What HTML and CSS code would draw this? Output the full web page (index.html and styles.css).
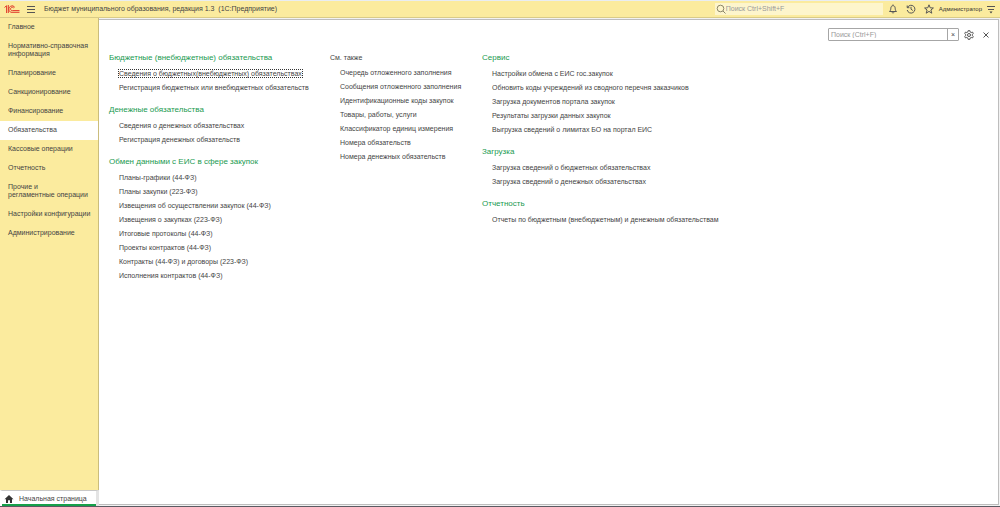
FILE: index.html
```html
<!DOCTYPE html>
<html lang="ru">
<head>
<meta charset="utf-8">
<title>Бюджет муниципального образования</title>
<link rel="stylesheet" href="styles.css">
</head>
<body>
<div class="app">
  <header class="topbar">
    <svg class="logo" viewBox="0 0 16 10" aria-hidden="true"><path d="M.5 3.500 2.200 2M2.600 1.500V9M4.300 1V9M10.800 3.300A3.300 3.300 0 1 0 9 8.300H15.500M9.700 4A1.700 1.700 0 1 0 8.600 6.600H15.500"/></svg>
    <button class="icon-btn menu-btn" aria-label="Меню"><svg class="icon" viewBox="0 0 10 10"><path d="M1 2.500h8M1 5.500h8M1 8.500h8"/></svg></button>
    <h1 class="app-title">Бюджет муниципального образования, редакция 1.3&nbsp; (1С:Предприятие)</h1>
    <label class="global-search">
      <svg class="icon" viewBox="0 0 10 10"><circle cx="4.500" cy="4.500" r="3.300"/><path d="M7 7l2.500 2.500"/></svg>
      <input type="text" placeholder="Поиск Ctrl+Shift+F" aria-label="Поиск Ctrl+Shift+F">
    </label>
    <div class="tools">
      <button class="icon-btn" aria-label="Уведомления"><svg class="icon" viewBox="0 0 10 10"><path d="M5 .5v1M1.500 7.500C3.200 6 2.600 4.500 3 3.200 3.500 1.200 6.500 1.200 7 3.200 7.400 4.500 6.800 6 8.500 7.500ZM4 8.300c.3 1 1.700 1 2 0"/></svg></button>
      <button class="icon-btn" aria-label="История"><svg class="icon" viewBox="0 0 10 10"><path d="M1.500 3.500A3.900 3.900 0 1 1 1.200 6M1.200 1.500v2.200h2.200M5 2.800V5.200L6.800 6.500"/></svg></button>
      <button class="icon-btn" aria-label="Избранное"><svg class="icon" viewBox="0 0 10 10"><path d="M5 .8 6.200 3.800 9.400 4 6.900 6 7.800 9.200 5 7.400 2.200 9.200 3.100 6 .6 4 3.800 3.800Z"/></svg></button>
    </div>
    <button class="user">Администратор</button>
    <button class="icon-btn" aria-label="Настройки панели"><svg class="icon" viewBox="0 0 10 10"><path d="M1 2.500h8M2 5.500h6"/><path class="solid" d="M3.500 7.500h3L5 9.500Z"/></svg></button>
  </header>

  <div class="body">
    <aside class="side">
      <nav class="sections">
        <a class="section" href="#">Главное</a>
        <a class="section" href="#">Нормативно-справочная<br>информация</a>
        <a class="section" href="#">Планирование</a>
        <a class="section" href="#">Санкционирование</a>
        <a class="section" href="#">Финансирование</a>
        <a class="section active" href="#" aria-current="page">Обязательства</a>
        <a class="section" href="#">Кассовые операции</a>
        <a class="section" href="#">Отчетность</a>
        <a class="section" href="#">Прочие и<br>регламентные операции</a>
        <a class="section" href="#">Настройки конфигурации</a>
        <a class="section" href="#">Администрирование</a>
      </nav>
      <a class="home-tab" href="#">
        <svg class="home-icon" viewBox="0 0 10 10" aria-hidden="true"><path d="M5 1 .5 5.200H2V9h2V6.200h2V9h2V5.200h1.500Z"/></svg>
        <span>Начальная страница</span>
      </a>
    </aside>

    <main class="panel">
      <div class="panel-bar">
        <div class="local-search">
          <input type="text" placeholder="Поиск (Ctrl+F)" aria-label="Поиск (Ctrl+F)">
          <button class="clear" aria-label="Очистить">×</button>
        </div>
        <button class="icon-btn" aria-label="Настройки"><svg class="icon" viewBox="0 0 10 10"><path d="M4.200.6h1.600l.3 1.300 1.100.6L8.500 2.100l.8 1.400-1 .9v1.200l1 .9-.8 1.400-1.300-.4-1.100.6-.3 1.300H4.200l-.3-1.300-1.100-.6-1.300.4-.8-1.400 1-.9V4.400l-1-.9.8-1.400 1.300.4 1.100-.6Z"/><circle cx="5" cy="5" r="1.500"/></svg></button>
        <button class="icon-btn close" aria-label="Закрыть"><svg class="icon" viewBox="0 0 10 10"><path d="M2.500 2.500l5 5M7.500 2.500l-5 5"/></svg></button>
      </div>

      <div class="columns">
        <div class="col col-main">
          <section class="group">
            <h2>Бюджетные (внебюджетные) обязательства</h2>
            <ul>
              <li><a class="focused" href="#">Сведения о бюджетных(внебюджетных) обязательствах</a></li>
              <li><a href="#">Регистрация бюджетных или внебюджетных обязательств</a></li>
            </ul>
          </section>
          <section class="group">
            <h2>Денежные обязательства</h2>
            <ul>
              <li><a href="#">Сведения о денежных обязательствах</a></li>
              <li><a href="#">Регистрация денежных обязательств</a></li>
            </ul>
          </section>
          <section class="group">
            <h2>Обмен данными с ЕИС в сфере закупок</h2>
            <ul>
              <li><a href="#">Планы-графики (44-ФЗ)</a></li>
              <li><a href="#">Планы закупки (223-ФЗ)</a></li>
              <li><a href="#">Извещения об осуществлении закупок (44-ФЗ)</a></li>
              <li><a href="#">Извещения о закупках (223-ФЗ)</a></li>
              <li><a href="#">Итоговые протоколы (44-ФЗ)</a></li>
              <li><a href="#">Проекты контрактов (44-ФЗ)</a></li>
              <li><a href="#">Контракты (44-ФЗ) и договоры (223-ФЗ)</a></li>
              <li><a href="#">Исполнения контрактов (44-ФЗ)</a></li>
            </ul>
          </section>
        </div>
        <div class="col col-also">
          <section class="group">
            <h2 class="minor">См. также</h2>
            <ul>
              <li><a href="#">Очередь отложенного заполнения</a></li>
              <li><a href="#">Сообщения отложенного заполнения</a></li>
              <li><a href="#">Идентификационные коды закупок</a></li>
              <li><a href="#">Товары, работы, услуги</a></li>
              <li><a href="#">Классификатор единиц измерения</a></li>
              <li><a href="#">Номера обязательств</a></li>
              <li><a href="#">Номера денежных обязательств</a></li>
            </ul>
          </section>
        </div>
        <div class="col col-service">
          <section class="group">
            <h2>Сервис</h2>
            <ul>
              <li><a href="#">Настройки обмена с ЕИС гос.закупок</a></li>
              <li><a href="#">Обновить коды учреждений из сводного перечня заказчиков</a></li>
              <li><a href="#">Загрузка документов портала закупок</a></li>
              <li><a href="#">Результаты загрузки данных закупок</a></li>
              <li><a href="#">Выгрузка сведений о лимитах БО на портал ЕИС</a></li>
            </ul>
          </section>
          <section class="group">
            <h2>Загрузка</h2>
            <ul>
              <li><a href="#">Загрузка сведений о бюджетных обязательствах</a></li>
              <li><a href="#">Загрузка сведений о денежных обязательствах</a></li>
            </ul>
          </section>
          <section class="group">
            <h2>Отчетность</h2>
            <ul>
              <li><a href="#">Отчеты по бюджетным (внебюджетным) и денежным обязательствам</a></li>
            </ul>
          </section>
        </div>
      </div>
    </main>
  </div>
</div>
</body>
</html>
```
FILE: styles.css
```css
* { box-sizing: border-box; }

body {
  margin: 0;
  font: 7px/14px "Liberation Sans", Arial, sans-serif;
  color: #444;
  background: #f2f2f2;
}

a { color: inherit; text-decoration: none; }
ul { margin: 0; padding: 0; list-style: none; }
h1, h2 { margin: 0; font-weight: normal; }
button, input { font: inherit; color: inherit; border: 0; background: none; padding: 0; margin: 0; outline: 0; }
input::placeholder { color: #999; opacity: 1; }

.app {
  display: flex;
  flex-direction: column;
  min-height: 100vh;
  border-top: 1px solid #e9edf2;
  border-bottom: 1px solid #5a5a62;
}

.topbar {
  display: flex;
  align-items: center;
  height: 17px;
  padding: 0 4px;
  background: #fbeb9e;
  border-bottom: 1px solid #d9cb88;
}

.logo { width: 16px; height: 10px; fill: none; stroke: #e0392b; stroke-width: 1; }
.icon-btn { display: flex; width: 10px; height: 10px; }
.icon { width: 10px; height: 10px; flex: none; fill: none; stroke: #555; stroke-width: 1; }
.icon .solid { fill: #444; stroke: none; }
.menu-btn { margin-left: 6px; }
.app-title { flex: 1; margin-left: 8px; font-size: 7px; }

.global-search {
  display: flex;
  align-items: center;
  width: 168px;
  height: 12px;
  padding-left: 1px;
  background: #fdf5cc;
}
.global-search .icon { stroke: #8c8668; }
.global-search input { flex: 1; min-width: 0; }

.tools { display: flex; gap: 8px; margin: 0 5px; }
.user { margin-right: 4px; font-size: 6px; color: #333; }

.body { display: flex; flex: 1; }

.side {
  display: flex;
  flex-direction: column;
  width: 99px;
  background: #fbeb9e;
}
.sections { flex: 1; border-right: 1px solid #cbbd7c; }
.section { display: block; padding: 5px 0 6px 8px; line-height: 8px; white-space: nowrap; }
.section.active { background: #fff; }

.home-tab {
  display: flex;
  align-items: center;
  gap: 5px;
  height: 16px;
  padding: 0 5px 0 2px;
  background: #fff;
  border: solid #c8c8c8;
  border-width: 1px 3px 0 2px;
  border-left-color: #fff;
  border-right-color: #e4e4e4;
  box-shadow: inset 0 -2px #16a04a;
}
.home-icon { width: 10px; height: 10px; fill: #333; }

.panel {
  flex: 1;
  margin: 1px 1px 1px 0;
  background: #fff;
  border: 1px solid #bdbdbd;
  border-left: 0;
}

.panel-bar {
  display: flex;
  justify-content: flex-end;
  align-items: center;
  padding: 8px 7px 0 0;
}
.local-search {
  display: flex;
  width: 131px;
  height: 13px;
  margin-right: 5px;
  border: 1px solid #a6a6a6;
  border-radius: 1px;
}
.local-search input { flex: 1; min-width: 0; padding-left: 2px; }
.clear { width: 11px; border-left: 1px solid #a6a6a6; line-height: 10px; }
.close { margin-left: 7px; }

.columns { display: flex; padding: 10px 10px 0; }
.col-main { width: 221px; }
.col-also { width: 152px; }
.col-service { flex: 1; }

.group { margin-bottom: 8px; }
.group h2 { margin-bottom: 2px; font-size: 8px; color: #1a9a50; }
.group h2.minor { margin-bottom: 1px; font-size: 7px; color: inherit; }
.group ul { padding-left: 10px; white-space: nowrap; }
.focused { outline: 1px dotted #333; }
```
